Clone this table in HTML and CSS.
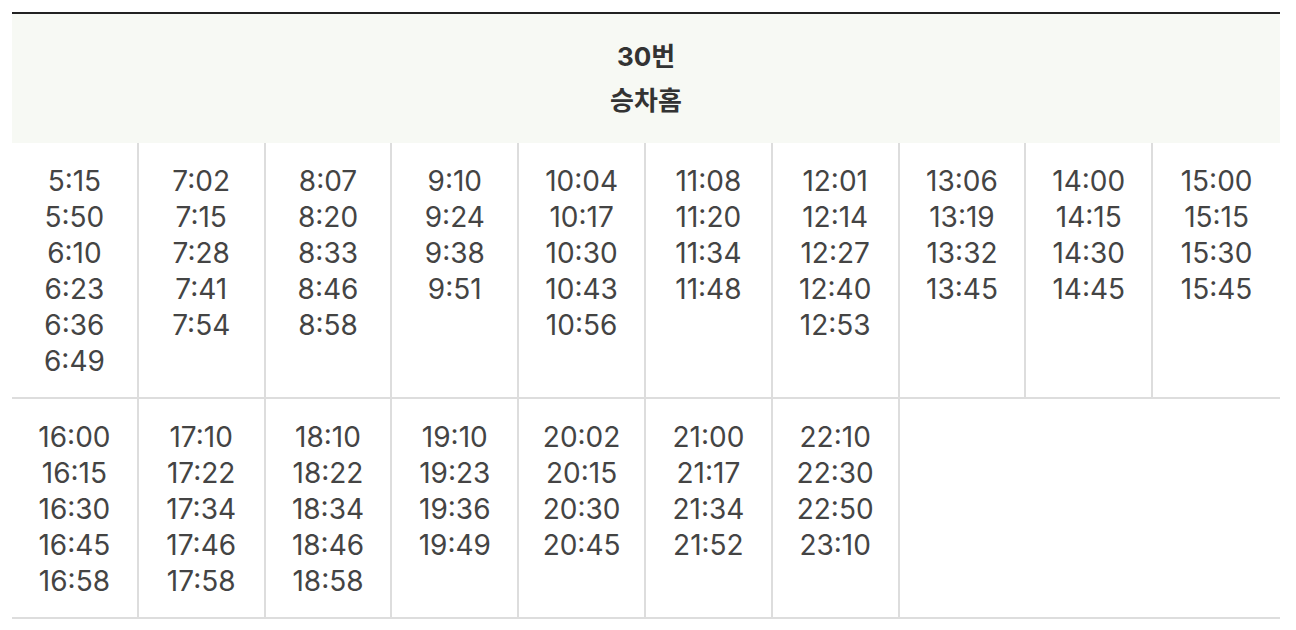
FILE: index.html
```html
<!doctype html>
<html lang="ko">
<head>
	<meta charset="UTF-8">
	<title>30번 시간표</title>
	<link rel="stylesheet" href="styles.css">
</head>
<body>
	<table class="timetable">
		<thead>
			<tr>
				<th colspan="10">30번<br>승차홈</th>
			</tr>
		</thead>
		<tbody>
			<tr>
				<td>5:15<br>5:50<br>6:10<br>6:23<br>6:36<br>6:49</td>
				<td>7:02<br>7:15<br>7:28<br>7:41<br>7:54</td>
				<td>8:07<br>8:20<br>8:33<br>8:46<br>8:58</td>
				<td>9:10<br>9:24<br>9:38<br>9:51</td>
				<td>10:04<br>10:17<br>10:30<br>10:43<br>10:56</td>
				<td>11:08<br>11:20<br>11:34<br>11:48</td>
				<td>12:01<br>12:14<br>12:27<br>12:40<br>12:53</td>
				<td>13:06<br>13:19<br>13:32<br>13:45</td>
				<td>14:00<br>14:15<br>14:30<br>14:45</td>
				<td>15:00<br>15:15<br>15:30<br>15:45</td>
			</tr>
			<tr>
				<td>16:00<br>16:15<br>16:30<br>16:45<br>16:58</td>
				<td>17:10<br>17:22<br>17:34<br>17:46<br>17:58</td>
				<td>18:10<br>18:22<br>18:34<br>18:46<br>18:58</td>
				<td>19:10<br>19:23<br>19:36<br>19:49</td>
				<td>20:02<br>20:15<br>20:30<br>20:45</td>
				<td>21:00<br>21:17<br>21:34<br>21:52</td>
				<td>22:10<br>22:30<br>22:50<br>23:10</td>
				<td colspan="3"></td>
			</tr>
		</tbody>
	</table>
</body>
</html>
```

FILE: styles.css
```css
body{ margin: 0; background: #fff; font-family: Inter, "Noto Sans CJK KR", sans-serif;}
.timetable{ width: 1268px; margin: 12px 0 0 12px; border-collapse: separate; border-spacing: 0; table-layout: fixed; border-top: 2px solid #222;}
.timetable th{ background: #f7f9f4; color: #333; font-size: 26px; font-weight: 700; line-height: 44px; padding: 21px 0 20px; text-align: center;}
.timetable td{ vertical-align: top; text-align: center; color: #444; font-size: 28px; line-height: 36px; padding: 20px 0 18px; border-bottom: 2px solid #ddd; border-right: 2px solid #ddd;}
.timetable td:last-child{ border-right: none;}
```
